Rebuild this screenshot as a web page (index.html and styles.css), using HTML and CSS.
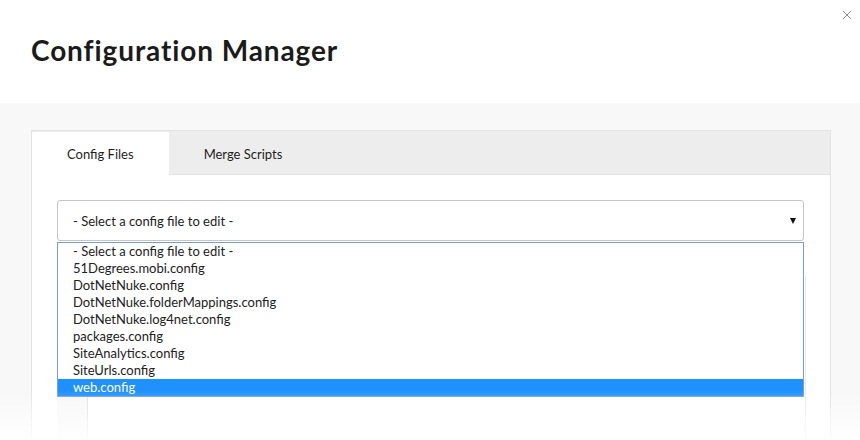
FILE: index.html
```html
<!DOCTYPE html>
<html>
<head>
<meta charset="utf-8">
<link rel="stylesheet" href="styles.css">
</head>
<body>
<div class="page">
  <header class="header">
    <h1 class="title">Configuration Manager</h1>
    <span class="close" aria-label="close">
      <svg width="10" height="10" viewBox="0 0 10 10"><path d="M1 1L9 9M9 1L1 9" stroke="#8a8a8a" stroke-width="1" fill="none"/></svg>
    </span>
  </header>
  <main class="main">
    <section class="panel">
      <nav class="tabs">
        <div class="tab active">Config Files</div>
        <div class="tab">Merge Scripts</div>
      </nav>
      <div class="content">
        <div class="field">
          <div class="select">
            <span class="select-text">- Select a config file to edit -</span>
            <span class="arrow"></span>
          </div>
          <ul class="dropdown">
            <li>- Select a config file to edit -</li>
            <li>51Degrees.mobi.config</li>
            <li>DotNetNuke.config</li>
            <li>DotNetNuke.folderMappings.config</li>
            <li>DotNetNuke.log4net.config</li>
            <li>packages.config</li>
            <li>SiteAnalytics.config</li>
            <li>SiteUrls.config</li>
            <li class="selected">web.config</li>
          </ul>
        </div>
        <div class="editor">
          <div class="gutter"></div>
          <div class="code"></div>
        </div>
      </div>
    </section>
  </main>
  <div class="fade"></div>
</div>
</body>
</html>
```

FILE: styles.css
```css
* { box-sizing: border-box; }
html, body { margin: 0; padding: 0; }
body {
  font-family: Lato, "Open Sans", "Liberation Sans", sans-serif;
  color: #222;
  background: #fff;
  width: 860px;
  height: 440px;
  overflow: hidden;
}
.page { position: relative; height: 440px; overflow: hidden; }
.header {
  position: relative;
  height: 103px;
  background: #fff;
  display: flex;
  align-items: center;
  padding-left: 31px;
}
.title {
  margin: 0;
  font-size: 28px;
  font-weight: 700;
  letter-spacing: 0.9px;
  color: #1b1b1b;
  padding-bottom: 3px;
}
.close {
  position: absolute;
  right: 8px;
  top: 10px;
  width: 10px;
  height: 10px;
  display: flex;
}
.main {
  background: #f8f8f8;
  padding: 27px 29px 0 31px;
  height: 337px;
}
.panel {
  border: 1px solid #e3e3e3;
  background: #fff;
  height: 330px;
}
.tabs {
  display: flex;
  background: #ededed;
  height: 44px;
  border-bottom: 1px solid #e2e2e2;
  padding: 1px 0 0 0;
}
.tab {
  padding: 0 35px;
  font-size: 13px;
  color: #1e1e1e;
  display: flex;
  align-items: center;
  height: 43px;
}
.tab.active {
  background: #fff;
  height: 44px;
  border-top-left-radius: 2px;
  border-top-right-radius: 2px;
}
.content {
  padding: 25px 26px 0 25px;
}
.field { position: relative; }
.select {
  height: 41px;
  border: 1px solid #c6c6c6;
  border-radius: 3px;
  display: flex;
  align-items: center;
  justify-content: space-between;
  padding: 0 6px 0 15px;
  font-size: 13px;
  color: #222;
}
.arrow {
  width: 0;
  height: 0;
  border-left: 3.5px solid transparent;
  border-right: 3.5px solid transparent;
  border-top: 6px solid #111;
  margin-right: 1px;
}
.dropdown {
  position: absolute;
  z-index: 2;
  left: 0;
  right: 0;
  top: 42px;
  margin: 0;
  padding: 0;
  list-style: none;
  background: #fff;
  border: 1px solid #7a9cd6;
  font-size: 13px;
  color: #222;
}
.dropdown li {
  height: 17px;
  line-height: 17px;
  padding-left: 15px;
  white-space: nowrap;
}
.dropdown li.selected {
  background: #1e90ff;
  color: #fff;
}
.editor {
  margin-top: 35px;
  margin-right: -2px;
  height: 200px;
  display: flex;
  border-right: 1px solid #e8e8e8;
}
.gutter {
  width: 31px;
  background: #f7f7f7;
  border-right: 1px solid #dedede;
}
.code { flex: 1; background: #fff; }
.fade {
  position: absolute;
  left: 0;
  right: 0;
  bottom: 0;
  height: 50px;
  background: linear-gradient(to bottom, rgba(255,255,255,0), rgba(255,255,255,0.9));
  z-index: 3;
}
```
